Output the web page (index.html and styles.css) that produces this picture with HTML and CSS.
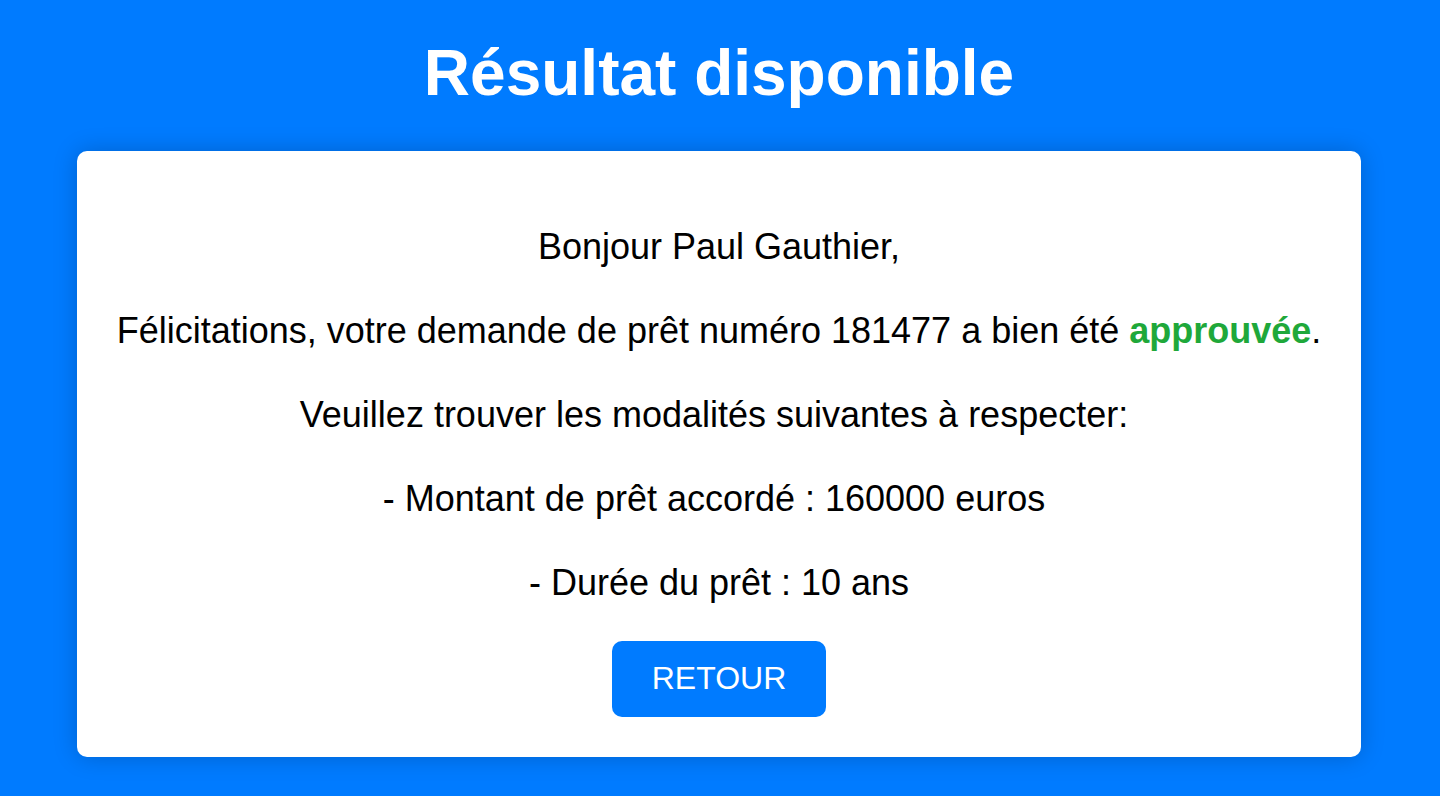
FILE: index.html
```html
<!DOCTYPE html>
<html lang="fr">
<head>
<meta charset="utf-8">
<meta name="viewport" content="width=device-width, initial-scale=1">
<title>Résultat disponible</title>
<link rel="stylesheet" href="styles.css">
</head>
<body>
<h1 class="title">Résultat disponible</h1>
<main class="card">
<p class="line">Bonjour Paul Gauthier,</p>
<p class="line">Félicitations, votre demande de prêt numéro 181477 a bien été <strong class="approved">approuvée</strong>.</p>
<p class="line">Veuillez trouver les modalités suivantes à respecter:&nbsp;</p>
<p class="line">- Montant de prêt accordé : 160000 euros&nbsp;</p>
<p class="line">- Durée du prêt : 10 ans</p>
<button class="back" type="button">RETOUR</button>
</main>
</body>
</html>
```

FILE: styles.css
```css
* {
  box-sizing: border-box;
}

body {
  margin: 0;
  min-height: 100vh;
  padding: 36px 79px 39px 77px;
  display: flex;
  flex-direction: column;
  align-items: center;
  background: #007bff;
  font-family: "Liberation Sans", Arial, sans-serif;
  color: #000;
}

.title {
  margin: 0 0 41px;
  font-size: 64px;
  line-height: 74px;
  color: #fff;
  text-align: center;
}

.card {
  width: 100%;
  padding: 75px 36px 40px;
  border-radius: 10px;
  background: #fff;
  box-shadow: 0 0 24px rgba(0, 0, 0, 0.2);
  text-align: center;
}

.line {
  margin: 0 0 42px;
  font-size: 36px;
  line-height: 42px;
}

.line:last-of-type {
  margin-bottom: 37px;
}

.approved {
  color: #1fa83a;
}

.back {
  padding: 19px 40px 21px;
  display: block;
  margin: 0 auto;
  border: 0;
  border-radius: 10px;
  background: #007bff;
  font: 32px/36px "Liberation Sans", Arial, sans-serif;
  color: #fff;
  cursor: pointer;
}
```
